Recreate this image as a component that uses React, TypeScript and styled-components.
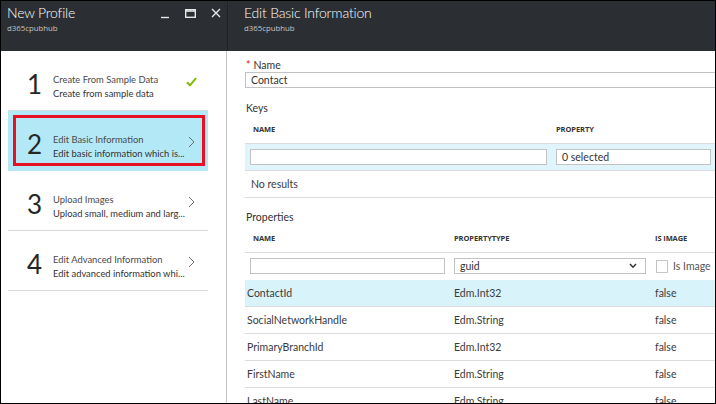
import { Fragment } from "react";
import styled, { createGlobalStyle } from "styled-components";

const GlobalStyle = createGlobalStyle`
    html, body {
        margin: 0;
        padding: 0;
        background: #ffffff;
    }
    body {
        font-family: Lato, "Open Sans", sans-serif;
    }
`;

const Frame = styled.div`
    width: 716px;
    height: 404px;
    box-sizing: border-box;
    border: 1px solid #000;
    display: flex;
    overflow: hidden;
    background: #fff;
    color: #3b3b3b;
    font-size: 10.5px;
`;

const LeftBlade = styled.div`
    width: 226px;
    flex-shrink: 0;
    display: flex;
    flex-direction: column;
`;

const RightBlade = styled.div`
    flex: 1;
    min-width: 0;
    display: flex;
    flex-direction: column;
`;

const BladeHeader = styled.div<{ $inset: number; $divider?: boolean }>`
    height: 50px;
    flex-shrink: 0;
    background: #2b2f33;
    box-sizing: border-box;
    padding: 3px 0 0 ${p => p.$inset}px;
    display: flex;
    justify-content: space-between;
    align-items: flex-start;
    border-left: ${p => (p.$divider ? "1px solid #1f2226" : "none")};
`;

const TitleBlock = styled.div`
    display: flex;
    flex-direction: column;
`;

const BladeTitle = styled.div`
    color: #fff;
    font-size: 14px;
    font-weight: 300;
    line-height: 18px;
    letter-spacing: -0.2px;
`;

const BladeSubtitle = styled.div`
    color: #c4c4c4;
    font-family: "Open Sans", sans-serif;
    font-size: 7.8px;
    line-height: 11px;
    margin-top: 1px;
`;

const Controls = styled.div`
    display: flex;
    align-items: center;
    gap: 15px;
    padding: 3px 6px 0 0;
    color: #e6e6e6;
`;

const StepList = styled.div`
    flex: 1;
    padding: 0 18px 0 7px;
    border-right: 1px solid #c4c4c4;
    display: flex;
    flex-direction: column;
`;

const StepRow = styled.div<{ $selected?: boolean }>`
    position: relative;
    height: 60px;
    box-sizing: border-box;
    padding-top: 6px;
    border-bottom: 1px solid ${p => (p.$selected ? "#b3e9f7" : "#d9d9d9")};
    background: ${p => (p.$selected ? "#b3e9f7" : "transparent")};
    display: flex;
    align-items: center;
`;

const StepNumber = styled.div`
    width: 26px;
    padding-left: 19px;
    font-size: 26px;
    line-height: 26px;
    color: #262626;
    flex-shrink: 0;
`;

const StepText = styled.div`
    flex: 1;
    min-width: 0;
    margin-top: 7px;
    display: flex;
    flex-direction: column;
    line-height: 14px;
    font-size: 9.4px;
    color: #333;
`;

const StepTitle = styled.div`
    color: #4a4a4a;
    white-space: nowrap;
`;

const StepDesc = styled.div`
    white-space: nowrap;
`;

const StepMark = styled.div`
    width: 34px;
    flex-shrink: 0;
    display: flex;
    justify-content: center;
    padding-bottom: 4px;
`;

const Highlight = styled.div`
    position: absolute;
    left: 5px;
    right: 3px;
    top: 4px;
    bottom: 4px;
    border: 3px solid #e81123;
    pointer-events: none;
`;

const Content = styled.div`
    padding: 8px 0 0 18px;
    display: flex;
    flex-direction: column;
`;

const FieldLabel = styled.div`
    line-height: 13px;
    padding-left: 1px;
    color: #333;
`;

const Required = styled.span`
    color: #e81123;
    margin-right: 3px;
`;

const TextInput = styled.div<{ $width?: string }>`
    width: ${p => p.$width ?? "100%"};
    height: 16px;
    box-sizing: border-box;
    border: 1px solid #c3c3c3;
    background: #fff;
    padding-left: 5px;
    line-height: 14px;
    color: #333;
    display: flex;
    align-items: center;
    justify-content: space-between;
`;

const SectionLabel = styled.div<{ $top: number }>`
    margin-top: ${p => p.$top}px;
    line-height: 14px;
    padding-left: 1px;
    color: #333;
`;

const Table = styled.div<{ $cols: string }>`
    display: grid;
    grid-template-columns: ${p => p.$cols};
`;

const HeadCell = styled.div<{ $lead?: boolean }>`
    height: 28px;
    box-sizing: border-box;
    padding-left: ${p => (p.$lead ? 8 : 5)}px;
    display: flex;
    align-items: center;
    font-family: "Open Sans", sans-serif;
    font-size: 7.5px;
    font-weight: 700;
    color: #333;
    letter-spacing: -0.1px;
`;

const FilterCell = styled.div<{ $tint?: boolean }>`
    height: 28px;
    box-sizing: border-box;
    padding: 0 4px 0 5px;
    display: flex;
    align-items: center;
    border-top: 1px solid #dcdcdc;
    border-bottom: 1px solid ${p => (p.$tint ? "#dcdcdc" : "transparent")};
    background: ${p => (p.$tint ? "#dff4fb" : "transparent")};
`;

const DataCell = styled.div<{ $selected?: boolean; $lead?: boolean }>`
    height: 27px;
    box-sizing: border-box;
    padding-left: ${p => (p.$lead ? 2 : 5)}px;
    display: flex;
    align-items: center;
    border-bottom: 1px solid #dcdcdc;
    background: ${p => (p.$selected ? "#d9f3fb" : "transparent")};
    color: #3b3b3b;
    white-space: nowrap;
`;

const EmptyRow = styled.div`
    grid-column: 1 / -1;
    height: 27px;
    box-sizing: border-box;
    padding-left: 6px;
    display: flex;
    align-items: center;
    border-bottom: 1px solid #dcdcdc;
`;

const CheckboxLabel = styled.label`
    display: flex;
    align-items: center;
    gap: 5px;
    padding-left: 1px;
    color: #555;
    white-space: nowrap;
`;

const CheckboxBox = styled.span`
    width: 12px;
    height: 13px;
    box-sizing: border-box;
    border: 1px solid #c6c6c6;
    background: #fff;
`;

function Chevron() {
    return (
        <svg width="7" height="12" viewBox="0 0 7 12">
            <path d="M1 1 L6 6 L1 11" fill="none" stroke="#6b6b6b" strokeWidth="1" />
        </svg>
    );
}

function Check() {
    return (
        <svg width="11" height="10" viewBox="0 0 11 10">
            <path d="M1 5.2 L4 8.3 L10 1.2" fill="none" stroke="#7fba00" strokeWidth="2" />
        </svg>
    );
}

function SelectArrow() {
    return (
        <svg width="8" height="6" viewBox="0 0 8 6" style={{ marginRight: 8 }}>
            <path d="M1 1 L4 4.2 L7 1" fill="none" stroke="#333" strokeWidth="1.5" />
        </svg>
    );
}

function WindowControls() {
    return (
        <Controls>
            <svg width="9" height="12" viewBox="0 0 9 12">
                <path d="M0 10.5 H8" stroke="currentColor" strokeWidth="1.4" />
            </svg>
            <svg width="11" height="9" viewBox="0 0 11 9">
                <rect x="0.7" y="0.7" width="9.6" height="7.6" fill="none" stroke="currentColor" strokeWidth="1.4" />
                <path d="M0 2 H11" stroke="currentColor" strokeWidth="1.6" />
            </svg>
            <svg width="10" height="10" viewBox="0 0 10 10">
                <path d="M1 1 L9 9 M9 1 L1 9" stroke="currentColor" strokeWidth="1.4" />
            </svg>
        </Controls>
    );
}

const steps = [
    { n: "1", title: "Create From Sample Data", desc: "Create from sample data", done: true },
    { n: "2", title: "Edit Basic Information", desc: "Edit basic information which is...", selected: true },
    { n: "3", title: "Upload Images", desc: "Upload small, medium and larg..." },
    { n: "4", title: "Edit Advanced Information", desc: "Edit advanced information whi..." },
];

const properties = [
    { name: "ContactId", type: "Edm.Int32", image: "false" },
    { name: "SocialNetworkHandle", type: "Edm.String", image: "false" },
    { name: "PrimaryBranchId", type: "Edm.Int32", image: "false" },
    { name: "FirstName", type: "Edm.String", image: "false" },
    { name: "LastName", type: "Edm.String", image: "false" },
];

export default function App() {
    return (
        <>
            <GlobalStyle />
            <Frame>
                <LeftBlade>
                    <BladeHeader $inset={6}>
                        <TitleBlock>
                            <BladeTitle>New Profile</BladeTitle>
                            <BladeSubtitle>d365cpubhub</BladeSubtitle>
                        </TitleBlock>
                        <WindowControls />
                    </BladeHeader>
                    <StepList>
                        {steps.map(step => (
                            <StepRow key={step.n} $selected={step.selected}>
                                <StepNumber>{step.n}</StepNumber>
                                <StepText>
                                    <StepTitle>{step.title}</StepTitle>
                                    <StepDesc>{step.desc}</StepDesc>
                                </StepText>
                                <StepMark>{step.done ? <Check /> : <Chevron />}</StepMark>
                                {step.selected && <Highlight />}
                            </StepRow>
                        ))}
                    </StepList>
                </LeftBlade>
                <RightBlade>
                    <BladeHeader $inset={16} $divider>
                        <TitleBlock>
                            <BladeTitle>Edit Basic Information</BladeTitle>
                            <BladeSubtitle>d365cpubhub</BladeSubtitle>
                        </TitleBlock>
                    </BladeHeader>
                    <Content>
                        <FieldLabel>
                            <Required>*</Required>Name
                        </FieldLabel>
                        <TextInput $width="calc(100% + 4px)">Contact</TextInput>

                        <SectionLabel $top={13}>Keys</SectionLabel>
                        <Table $cols="306px 1fr">
                            <HeadCell $lead>NAME</HeadCell>
                            <HeadCell>PROPERTY</HeadCell>
                            <FilterCell $tint>
                                <TextInput />
                            </FilterCell>
                            <FilterCell $tint>
                                <TextInput $width="calc(100% + 10px)">0 selected</TextInput>
                            </FilterCell>
                            <EmptyRow>No results</EmptyRow>
                        </Table>

                        <SectionLabel $top={12}>Properties</SectionLabel>
                        <Table $cols="204px 201px 1fr">
                            <HeadCell $lead>NAME</HeadCell>
                            <HeadCell>PROPERTYTYPE</HeadCell>
                            <HeadCell>IS IMAGE</HeadCell>
                            <FilterCell>
                                <TextInput />
                            </FilterCell>
                            <FilterCell>
                                <TextInput>
                                    guid
                                    <SelectArrow />
                                </TextInput>
                            </FilterCell>
                            <FilterCell>
                                <CheckboxLabel>
                                    <CheckboxBox />
                                    Is Image
                                </CheckboxLabel>
                            </FilterCell>
                            {properties.map((p, i) => (
                                <Fragment key={p.name}>
                                    <DataCell $lead $selected={i === 0}>
                                        {p.name}
                                    </DataCell>
                                    <DataCell $selected={i === 0}>{p.type}</DataCell>
                                    <DataCell $selected={i === 0}>{p.image}</DataCell>
                                </Fragment>
                            ))}
                        </Table>
                    </Content>
                </RightBlade>
            </Frame>
        </>
    );
}
